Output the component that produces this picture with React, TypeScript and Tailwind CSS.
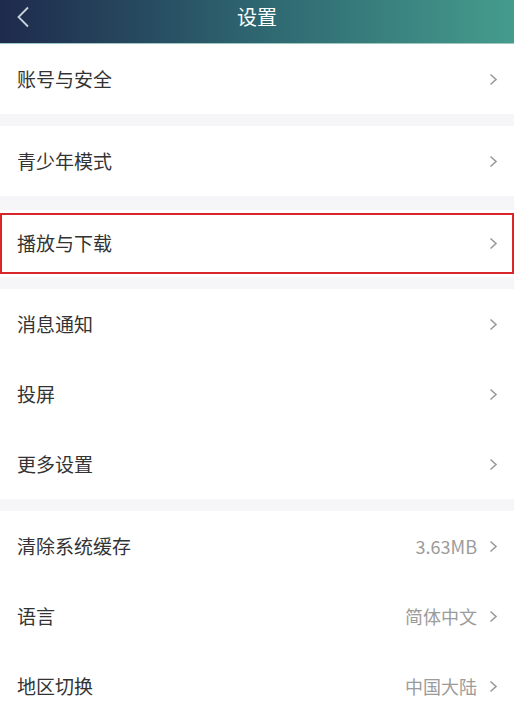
import React from "react";

type Item = { label: string; value?: string };

const groups: Item[][] = [
  [{ label: "账号与安全" }],
  [{ label: "青少年模式" }],
  [{ label: "播放与下载" }],
  [{ label: "消息通知" }, { label: "投屏" }, { label: "更多设置" }],
  [
    { label: "清除系统缓存", value: "3.63MB" },
    { label: "语言", value: "简体中文" },
    { label: "地区切换", value: "中国大陆" },
  ],
];

function Chevron() {
  return (
    <svg width="9" height="13" viewBox="0 0 9 13" fill="none" className="shrink-0">
      <path d="M1.5 1.5L7 6.5L1.5 11.5" stroke="#9a9a9a" strokeWidth="1.6" />
    </svg>
  );
}

function Row({ item }: { item: Item }) {
  return (
    <div className="flex h-[70px] items-center justify-between pl-[17px] pr-[16px]">
      <span className="text-[19px] text-[#333]">{item.label}</span>
      <div className="flex items-center gap-[12px]">
        {item.value && <span className="text-[18px] text-[#9b9b9b]">{item.value}</span>}
        <Chevron />
      </div>
    </div>
  );
}

export default function App() {
  return (
    <div
      className="min-h-[728px] w-[517px] bg-white"
      style={{ fontFamily: '"Noto Sans CJK SC", "Noto Sans", sans-serif' }}
    >
      <div className="w-[514px]">
        <header className="relative flex h-[44px] items-center justify-center border-b border-[#9ec7c0] bg-gradient-to-r from-[#1e2a4c] via-[#2e6670] to-[#459c8d] pb-[9px]">
          <svg
            width="14"
            height="22"
            viewBox="0 0 14 22"
            fill="none"
            className="absolute left-[16px] top-[6px]"
          >
            <path d="M12 1.5L2.5 11L12 20.5" stroke="#c9d3dc" strokeWidth="1.8" />
          </svg>
          <span className="text-[20px] text-white">设置</span>
        </header>

        {groups.map((group, gi) => (
          <div key={gi}>
            {gi > 0 && <div className={gi === 2 ? "h-[14px] bg-[#f6f6f8]" : "h-[12px] bg-[#f6f6f8]"} />}
            {gi === 2 ? (
              <div className="flex h-[67px] items-center py-[3px]">
                <div className="flex h-[61px] w-full items-center justify-between border-2 border-[#d9262b] pl-[15px] pr-[14px]">
                  <span className="text-[19px] text-[#333]">{group[0].label}</span>
                  <Chevron />
                </div>
              </div>
            ) : (
              group.map((item) => <Row key={item.label} item={item} />)
            )}
          </div>
        ))}
      </div>
    </div>
  );
}
